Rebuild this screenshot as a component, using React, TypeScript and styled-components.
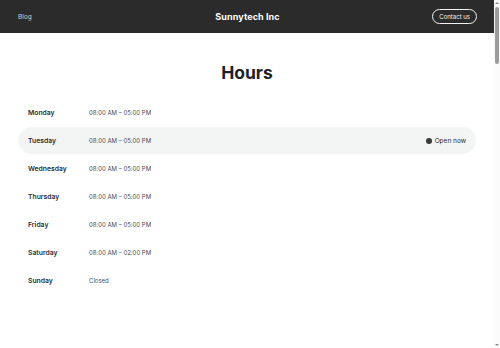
import React from "react";
import styled, { createGlobalStyle } from "styled-components";

const GlobalStyle = createGlobalStyle`
  html, body {
    margin: 0;
    padding: 0;
    height: 100%;
    overflow: hidden;
    background: #ffffff;
    font-family: Inter, "Liberation Sans", sans-serif;
    color: #1d2127;
  }
`;

type Day = { name: string; hours: string; current?: boolean };

const days: Day[] = [
  { name: "Monday", hours: "08:00 AM – 05:00 PM" },
  { name: "Tuesday", hours: "08:00 AM – 05:00 PM", current: true },
  { name: "Wednesday", hours: "08:00 AM – 05:00 PM" },
  { name: "Thursday", hours: "08:00 AM – 05:00 PM" },
  { name: "Friday", hours: "08:00 AM – 05:00 PM" },
  { name: "Saturday", hours: "08:00 AM – 02:00 PM" },
  { name: "Sunday", hours: "Closed" },
];

export default function App() {
  return (
    <>
      <GlobalStyle />
      <Frame>
        <Viewport>
          <Header>
            <NavLink>Blog</NavLink>
            <Brand>Sunnytech Inc</Brand>
            <ContactButton>Contact us</ContactButton>
          </Header>
          <Main>
            <Title>Hours</Title>
            <List>
              {days.map((d) => (
                <Row key={d.name} $current={d.current}>
                  <DayName>{d.name}</DayName>
                  <Hours>{d.hours}</Hours>
                  {d.current && (
                    <Status>
                      <Dot />
                      Open now
                    </Status>
                  )}
                </Row>
              ))}
            </List>
          </Main>
        </Viewport>
        <ScrollRail>
          <Arrow $dir="up" />
          <Thumb />
          <Arrow $dir="down" />
        </ScrollRail>
      </Frame>
    </>
  );
}

const Frame = styled.div`
  height: 100vh;
  display: flex;
`;

const Viewport = styled.div`
  flex: 1;
  overflow: hidden;
`;

const ScrollRail = styled.div`
  width: 6px;
  background: #fafafa;
  display: flex;
  flex-direction: column;
  align-items: center;
  padding: 2px 0;
  box-sizing: border-box;
`;

const Thumb = styled.div`
  width: 4px;
  height: 57px;
  margin: 3px 0 auto;
  border-radius: 2px;
  background: #9c9c9c;
`;

const Arrow = styled.div<{ $dir: "up" | "down" }>`
  width: 0;
  height: 0;
  border-left: 2px solid transparent;
  border-right: 2px solid transparent;
  ${(p) =>
    p.$dir === "up"
      ? "border-bottom: 2px solid #8a8a8a;"
      : "border-top: 2px solid #8a8a8a;"}
`;

const Header = styled.header`
  height: 33px;
  background: #2b2b2b;
  display: grid;
  grid-template-columns: 1fr auto 1fr;
  align-items: center;
  padding: 0 17px 0 18px;
`;

const NavLink = styled.a`
  font-size: 6.5px;
  color: #cfcfcf;
  justify-self: start;
`;

const Brand = styled.div`
  font-size: 9px;
  font-weight: 700;
  color: #ffffff;
  letter-spacing: 0.1px;
`;

const ContactButton = styled.button`
  justify-self: end;
  height: 15px;
  padding: 0 6px;
  border: 1px solid #f2f2f2;
  border-radius: 8px;
  background: transparent;
  color: #f2f2f2;
  font-family: inherit;
  font-size: 6px;
`;

const Main = styled.main`
  padding: 30px 18px 0;
`;

const Title = styled.h1`
  margin: 0 0 16px;
  text-align: center;
  font-size: 17.5px;
  font-weight: 700;
  line-height: 20px;
  color: #1d2127;
`;

const List = styled.div`
  display: flex;
  flex-direction: column;
  gap: 1px;
`;

const Row = styled.div<{ $current?: boolean }>`
  height: 27px;
  display: flex;
  align-items: center;
  padding: 0 10px;
  border-radius: 14px;
  background: ${(p) => (p.$current ? "#f3f4f4" : "transparent")};
`;

const DayName = styled.span`
  width: 61px;
  font-size: 6.8px;
  font-weight: 600;
  color: #2a2d33;
`;

const Hours = styled.span`
  font-size: 6px;
  color: #4a4d52;
`;

const Status = styled.span`
  margin-left: auto;
  display: flex;
  align-items: center;
  gap: 3px;
  font-size: 6.5px;
  color: #2b2b2b;
`;

const Dot = styled.span`
  width: 6px;
  height: 6px;
  border-radius: 50%;
  background: #3a3a3a;
`;
